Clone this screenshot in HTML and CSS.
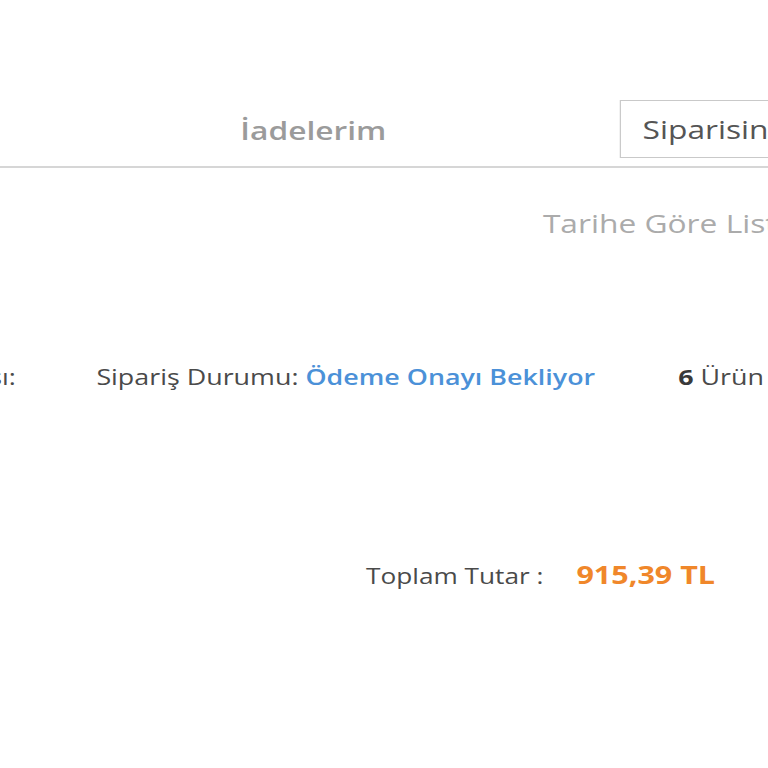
FILE: index.html
```html
<!DOCTYPE html>
<html>
<head>
  <title>Siparişlerim</title>
  <link rel="stylesheet" href="styles.css">
</head>
<body>
  <div class="page">
    <div class="tabs">
      <a class="tab" href="#">İadelerim</a>
      <input class="order-search" type="text" value="Siparisinde Ara">
    </div>

    <div class="sort-row">
      <span class="sort-label">Tarihe Göre Listele</span>
    </div>

    <div class="order-row">
      <div class="cell order-no">Sipariş Numarası:</div>
      <div class="cell order-status">Sipariş Durumu: <span class="status">Ödeme Onayı Bekliyor</span></div>
      <div class="cell order-count"><b>6</b> Ürün</div>
    </div>

    <div class="total-row">
      <span class="total-label">Toplam Tutar :</span>
      <span class="total-price">915,39 TL</span>
    </div>
  </div>
</body>
</html>
```

FILE: styles.css
```css
html, body {
  margin: 0;
  background-color: #fff;
  overflow: hidden;
}
body {
  width: 768px;
  height: 768px;
  font-family: "Open Sans", "Noto Sans", sans-serif;
  color: #4a4a4a;
}
/* the shop page is shown stretched a little wider than it is tall */
.page {
  width: 630px;
  padding-top: 99px;
  transform: scaleX(1.22);
  transform-origin: 0 0;
}
.tabs {
  display: flex;
  align-items: center;
  height: 69px;
  border-bottom: 2px solid #d6d6d6;
  padding-left: 197px;
  box-sizing: border-box;
}
.tab {
  font-size: 26px;
  font-weight: 600;
  color: #9b9b9b;
  text-decoration: none;
  margin-top: -6px;
}
.order-search {
  margin: 1px 0 0 191px;
  width: 260px;
  height: 58px;
  flex-shrink: 0;
  align-self: flex-start;
  box-sizing: border-box;
  border: 1px solid #c9c9c9;
  padding: 0 18px;
  font-family: inherit;
  font-size: 26px;
  color: #555;
  outline: none;
}
.sort-row {
  padding: 37px 0 0 445px;
  white-space: nowrap;
}
.sort-label {
  font-size: 26px;
  color: #ababab;
}
.order-row {
  display: flex;
  align-items: center;
  margin-top: 120px;
  white-space: nowrap;
  font-size: 22px;
}
.order-no {
  width: 220px;
  margin-left: -207px;
  text-align: right;
  flex-shrink: 0;
}
.order-status {
  margin-left: 66px;
}
.status {
  color: #4b91d8;
  font-weight: 600;
}
.order-count {
  margin-left: 68px;
}
.order-count b {
  font-weight: 700;
  color: #3a3a3a;
}
.total-row {
  display: flex;
  align-items: baseline;
  margin-top: 166px;
  padding-left: 300px;
  white-space: nowrap;
}
.total-label {
  font-size: 21.5px;
}
.total-price {
  margin-left: 27px;
  font-size: 25px;
  font-weight: 700;
  color: #f0872a;
}
```
